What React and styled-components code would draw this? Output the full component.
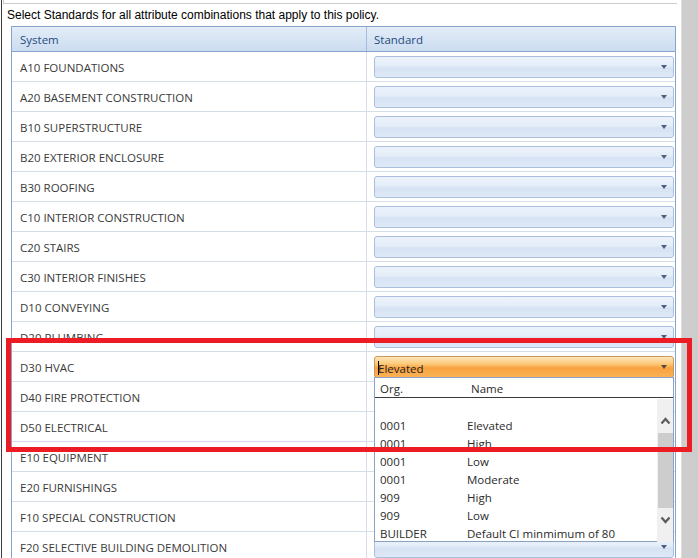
import React from "react";
import styled, { createGlobalStyle } from "styled-components";

const GlobalStyle = createGlobalStyle`
  html, body {
    margin: 0;
    padding: 0;
    background: #ffffff;
    overflow: hidden;
  }
`;

const systems = [
  "A10 FOUNDATIONS",
  "A20 BASEMENT CONSTRUCTION",
  "B10 SUPERSTRUCTURE",
  "B20 EXTERIOR ENCLOSURE",
  "B30 ROOFING",
  "C10 INTERIOR CONSTRUCTION",
  "C20 STAIRS",
  "C30 INTERIOR FINISHES",
  "D10 CONVEYING",
  "D20 PLUMBING",
  "D30 HVAC",
  "D40 FIRE PROTECTION",
  "D50 ELECTRICAL",
  "E10 EQUIPMENT",
  "E20 FURNISHINGS",
  "F10 SPECIAL CONSTRUCTION",
  "F20 SELECTIVE BUILDING DEMOLITION",
];

const options = [
  { org: "", name: "" },
  { org: "0001", name: "Elevated" },
  { org: "0001", name: "High" },
  { org: "0001", name: "Low" },
  { org: "0001", name: "Moderate" },
  { org: "909", name: "High" },
  { org: "909", name: "Low" },
  { org: "BUILDER", name: "Default CI minmimum of 80" },
];

function Chevron({ up }) {
  return (
    <svg width="11" height="8" viewBox="0 0 11 8">
      <polyline
        points={up ? "1.5,6.5 5.5,2 9.5,6.5" : "1.5,1.5 5.5,6 9.5,1.5"}
        fill="none"
        stroke="#5c5c5c"
        strokeWidth="2.2"
      />
    </svg>
  );
}

function StandardPicker({ open, value }) {
  return (
    <Combo $open={open}>
      {open && <Caret />}
      <ComboText>{value}</ComboText>
      <Arrow $open={open} />
      {open && (
        <Popup>
          <PopupHeader>
            <HeadOrg>Org.</HeadOrg>
            <span>Name</span>
          </PopupHeader>
          <PopupBody>
            <List>
              {options.map((o, i) => (
                <Item key={i}>
                  <OrgCol>{o.org}</OrgCol>
                  <span>{o.name}</span>
                </Item>
              ))}
            </List>
            <ScrollBar>
              <ScrollBtn>
                <Chevron up />
              </ScrollBtn>
              <Thumb />
              <ScrollBtn>
                <Chevron />
              </ScrollBtn>
            </ScrollBar>
          </PopupBody>
        </Popup>
      )}
    </Combo>
  );
}

export default function App() {
  return (
    <>
      <GlobalStyle />
      <Page>
        <Main>
          <TopBox />
          <Caption>
            Select Standards for all attribute combinations that apply to this
            policy.
          </Caption>
          <Grid>
            <HeaderRow>
              <HeaderCell $first>System</HeaderCell>
              <HeaderCell>Standard</HeaderCell>
            </HeaderRow>
            {systems.map((s) => (
              <Row key={s}>
                <SystemCell>{s}</SystemCell>
                <StandardCell>
                  <StandardPicker
                    open={s === "D30 HVAC"}
                    value={s === "D30 HVAC" ? "Elevated" : ""}
                  />
                </StandardCell>
              </Row>
            ))}
          </Grid>
        </Main>
        <PageScroll />
        <Highlight />
      </Page>
    </>
  );
}

const Page = styled.div`
  position: relative;
  width: 698px;
  height: 558px;
  overflow: hidden;
  display: flex;
  font-family: "Open Sans", "Noto Sans", sans-serif;
`;

const Main = styled.div`
  flex: 1;
  margin-left: 1px;
  border-left: 1px solid #3c3c3c;
  display: flex;
  flex-direction: column;
`;

const TopBox = styled.div`
  height: 3px;
  width: 673px;
  margin-left: 1px;
  border-left: 1px solid #cccccc;
  border-bottom: 1px solid #cccccc;
  flex-shrink: 0;
`;

const Caption = styled.div`
  height: 22px;
  line-height: 22px;
  padding-left: 5px;
  font-family: "Liberation Sans", Arial, sans-serif;
  font-size: 12px;
  color: #000;
  flex-shrink: 0;
`;

const Grid = styled.div`
  margin-left: 9px;
  width: 665px;
  box-sizing: border-box;
  border: 1px solid #86a5cd;
  border-bottom: none;
  flex-shrink: 0;
`;

const HeaderRow = styled.div`
  display: grid;
  grid-template-columns: 355px 1fr;
  height: 25px;
  box-sizing: border-box;
  border-bottom: 1px solid #86a5cd;
  background: linear-gradient(#e4edf8, #cbdcf0);
`;

const HeaderCell = styled.div`
  padding: 2px 0 0 ${(p) => (p.$first ? "8px" : "7px")};
  line-height: 22px;
  font-size: 11.5px;
  color: #1f4a80;
  border-right: ${(p) => (p.$first ? "1px solid #a3bcdc" : "none")};
`;

const Row = styled.div`
  display: grid;
  grid-template-columns: 355px 1fr;
  height: 30px;
  box-sizing: border-box;
  border-bottom: 1px solid #d5dde8;
`;

const SystemCell = styled.div`
  display: flex;
  align-items: center;
  padding: 2px 0 0 8px;
  font-size: 11.5px;
  color: #3a3a3a;
  border-right: 1px solid #d5dde8;
  white-space: nowrap;
`;

const StandardCell = styled.div`
  padding: 4px 1px 0 7px;
`;

const Combo = styled.div`
  position: relative;
  height: 22px;
  box-sizing: border-box;
  display: flex;
  align-items: center;
  padding: 0 6px 0 3px;
  border: 1px solid ${(p) => (p.$open ? "#c9975a" : "#a9bfdc")};
  border-radius: 3px;
  background: ${(p) =>
    p.$open
      ? "linear-gradient(#fee6bb 0%, #fcc878 35%, #f9a23f 55%, #fab255 100%)"
      : "linear-gradient(#ecf2fb 0%, #e4edf9 45%, #d6e3f4 55%, #dfe9f7 100%)"};
`;

const Caret = styled.span`
  width: 1px;
  height: 14px;
  margin-top: 2px;
  background: #000;
  margin-right: -1px;
`;

const ComboText = styled.span`
  flex: 1;
  padding-top: 2px;
  font-size: 11.5px;
  color: #222;
`;

const Arrow = styled.span`
  width: 0;
  height: 0;
  border-left: 3px solid transparent;
  border-right: 3px solid transparent;
  border-top: 4px solid ${(p) => (p.$open ? "#5a4a3a" : "#4e607e")};
`;

const Popup = styled.div`
  position: absolute;
  top: 100%;
  left: -1px;
  width: 300px;
  height: 165px;
  box-sizing: border-box;
  z-index: 5;
  background: #fff;
  border: 1px solid #8ca2c2;
  display: flex;
  flex-direction: column;
  font-size: 11.5px;
  color: #2a2a2a;
`;

const PopupHeader = styled.div`
  height: 20px;
  box-sizing: border-box;
  padding: 2px 0 0 5px;
  line-height: 17px;
  border-bottom: 1px solid #3a3a3a;
  display: flex;
`;

const HeadOrg = styled.span`
  width: 91px;
`;

const PopupBody = styled.div`
  flex: 1;
  display: flex;
`;

const List = styled.div`
  flex: 1;
`;

const Item = styled.div`
  height: 18px;
  box-sizing: border-box;
  padding: 1px 0 0 5px;
  line-height: 17px;
  display: flex;
  white-space: nowrap;
`;

const OrgCol = styled.span`
  width: 87px;
`;

const ScrollBar = styled.div`
  width: 16px;
  margin-top: 1px;
  background: #f0f0f0;
  display: flex;
  flex-direction: column;
  align-items: center;
  padding: 13px 0 0;
  box-sizing: border-box;
`;

const ScrollBtn = styled.div`
  height: 17px;
  display: flex;
  align-items: center;
  justify-content: center;
`;

const Thumb = styled.div`
  align-self: stretch;
  margin: 4px 0 3px 1px;
  height: 75px;
  background: #cdcdcd;
`;

const PageScroll = styled.div`
  width: 17px;
  flex-shrink: 0;
  background: #cdcdcd;
  border-left: 1px solid #dedede;
  box-sizing: border-box;
`;

const Highlight = styled.div`
  position: absolute;
  left: 6px;
  top: 338px;
  width: 686px;
  height: 114px;
  box-sizing: border-box;
  border: 5px solid #ed1c24;
  z-index: 20;
  pointer-events: none;
`;
